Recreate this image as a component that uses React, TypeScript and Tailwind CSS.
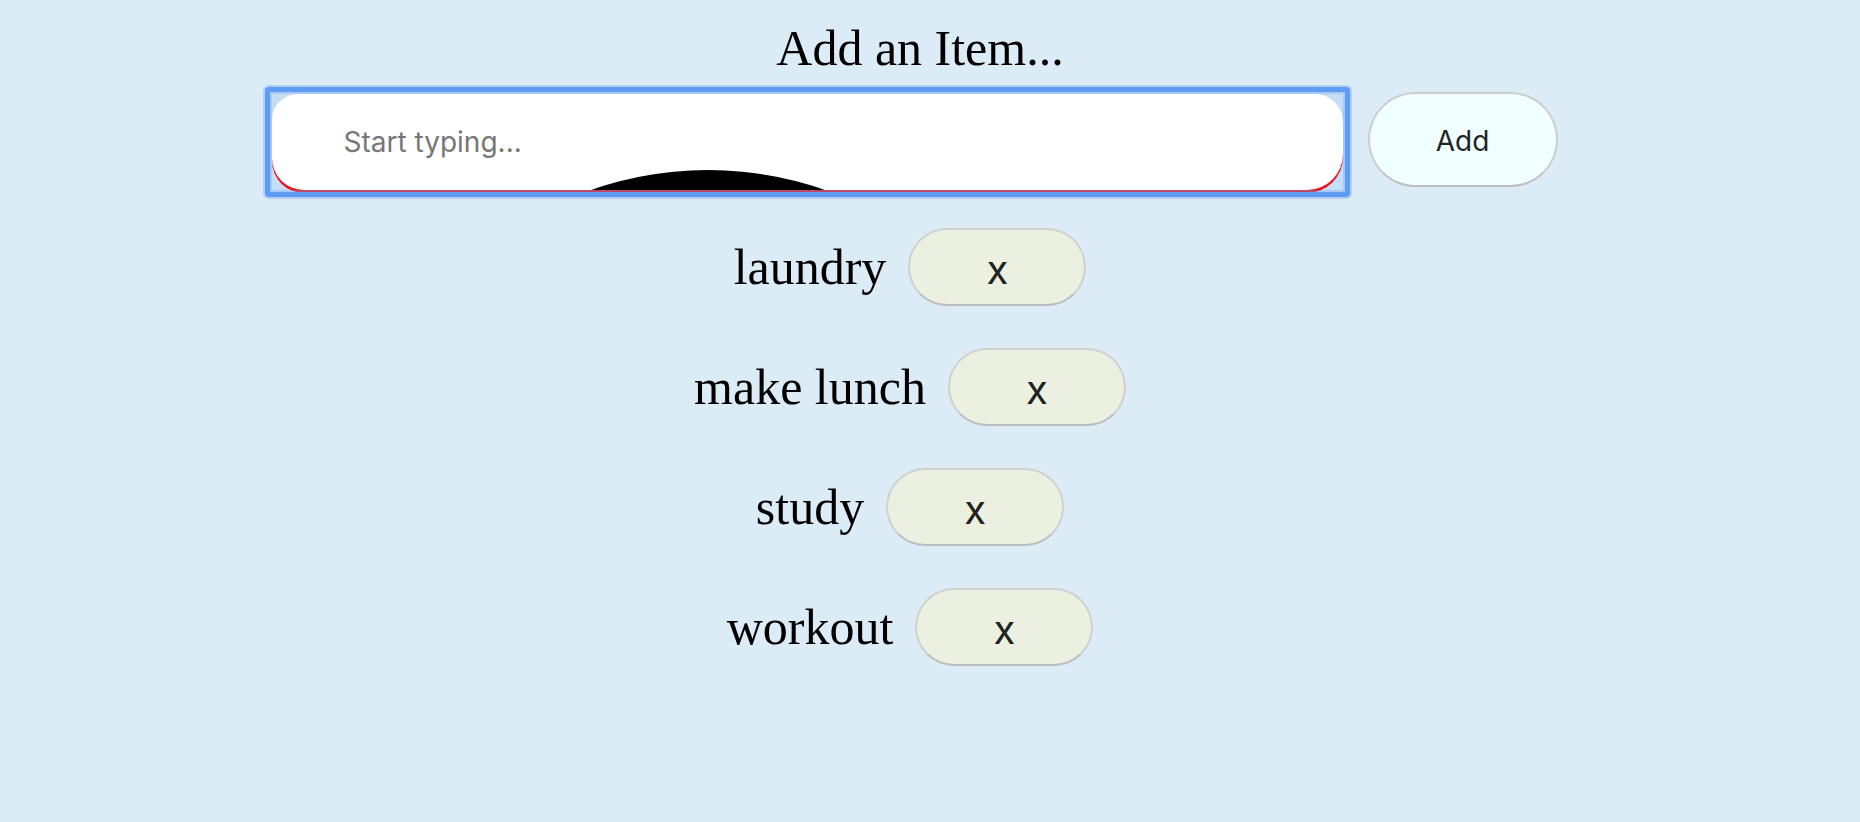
import React, { useState } from "react";

const items = ["laundry", "make lunch", "study", "workout"];

const TodoRow = ({ label }: { label: string }) => (
    <li className="flex items-baseline gap-[22px]">
        <span className="text-[50px] leading-[58px] text-black">{label}</span>
        <button className="flex h-[78px] w-[178px] items-center justify-center rounded-full border-2 border-[#d0d0d0] border-b-[#bcbcbc] bg-[#ecf0e0] pt-[5px] font-['Inter',sans-serif] text-[40px] leading-none text-[#222]">
            x
        </button>
    </li>
);

export default function App() {
    const [value, setValue] = useState("");

    return (
        <div className="min-h-[822px] w-full bg-[#dcecf7] font-['Liberation_Serif','Times_New_Roman',serif]">
            <div className="flex flex-col items-center pr-[40px]">
                {/* Title */}
                <h1 className="mt-[19px] pl-[20px] text-[50px] font-normal leading-[58px] text-black">
                    Add an Item...
                </h1>

                {/* Input row */}
                <div className="mt-[8px] flex items-start gap-[16px]">
                    <div className="relative rounded-[6px] bg-[#c6ddf7] p-[9px]">
                        <div className="relative h-[96px] w-[1071px] overflow-hidden rounded-tl-[26px] rounded-tr-[28px] rounded-br-[36px] rounded-bl-[32px] bg-white shadow-[0_3px_0_#e8141e]">
                            <div className="absolute left-[85px] top-[76px] h-[702px] w-[702px] rounded-full bg-black" />
                            <input
                                value={value}
                                onChange={(e) => setValue(e.target.value)}
                                placeholder="Start typing..."
                                className="relative h-full w-full bg-transparent pl-[72px] font-['Inter',sans-serif] text-[28px] text-black outline-none placeholder:text-[#777]"
                            />
                        </div>
                        {/* focus ring */}
                        <div className="pointer-events-none absolute inset-0 rounded-[6px] border-2 border-[#afcff6]" />
                        <div className="pointer-events-none absolute inset-[2px] rounded-[4px] border-[5px] border-[#5e9bf2]" />
                        <div className="pointer-events-none absolute inset-[7px] border-2 border-[rgba(110,165,240,0.35)]" />
                    </div>
                    <button className="mt-[7px] flex h-[95px] w-[190px] items-center justify-center rounded-full border-2 border-[#cdcdcd] border-b-[#bfbfbf] bg-[#f0ffff] pt-[3px] font-['Inter',sans-serif] text-[28px] text-[#222]">
                        Add
                    </button>
                </div>

                {/* Items */}
                <ul className="mt-[29px] flex flex-col items-center gap-[42px]">
                    {items.map((item) => (
                        <TodoRow key={item} label={item} />
                    ))}
                </ul>
            </div>
        </div>
    );
}
